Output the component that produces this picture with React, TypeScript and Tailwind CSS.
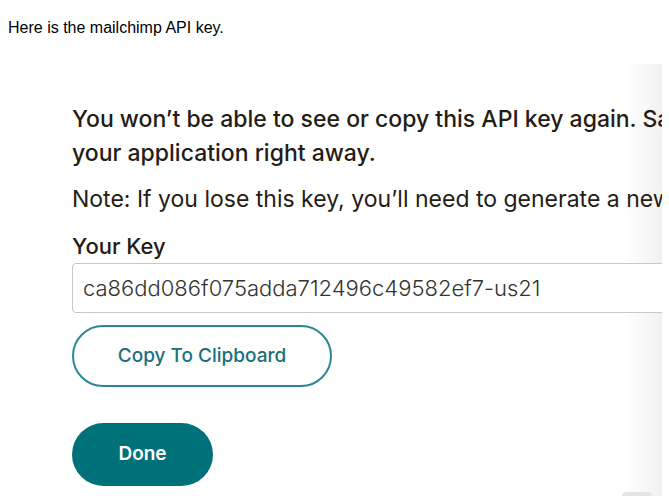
const App = () => {
  return (
    <div className="min-h-screen bg-white">
      {/* Message text */}
      <p className="px-2 pt-[19px] font-['Liberation_Sans',Arial,sans-serif] text-[16px] leading-[18px] text-black">
        Here is the mailchimp API key.
      </p>

      {/* Screenshot of the Mailchimp dialog */}
      <div className="mt-[27px] w-[662px] overflow-hidden bg-[linear-gradient(to_right,#ffffff_625px,#f1f1f1_662px)] pl-[72px] pt-[38px] font-['Inter',sans-serif] text-[#241c15]">
        <div className="w-[760px]">
          <p className="whitespace-nowrap text-[23px] font-medium leading-[34px]">
            You won’t be able to see or copy this API key again. Save
            <br />
            your application right away.
          </p>
          <p className="mt-[12px] whitespace-nowrap text-[23px] leading-[34px]">
            Note: If you lose this key, you’ll need to generate a new one.
          </p>

          {/* Key field */}
          <div className="mt-[13px] text-[22px] font-medium leading-[34px]">Your Key</div>
          <div className="flex h-[50px] items-center rounded-[4px] border border-[#c8c8c8] bg-white px-[10px] text-[22px] font-light text-[#333333]">
            ca86dd086f075adda712496c49582ef7-us21
          </div>

          {/* Actions */}
          <button className="mt-[12px] flex h-[62px] w-[260px] items-center justify-center rounded-full border-2 border-[#2a8791] bg-white text-[19px] font-medium text-[#1b6f7a]">
            Copy To Clipboard
          </button>
          <button className="mt-[36px] flex h-[63px] w-[141px] items-center justify-center rounded-full bg-[#007079] text-[19px] font-semibold text-white">
            Done
          </button>
          <div className="ml-[550px] mt-[6px] h-[8px] w-[30px] rounded-t-[4px] bg-[#e4e4e4]" />
        </div>
      </div>
    </div>
  );
};

export default App;
